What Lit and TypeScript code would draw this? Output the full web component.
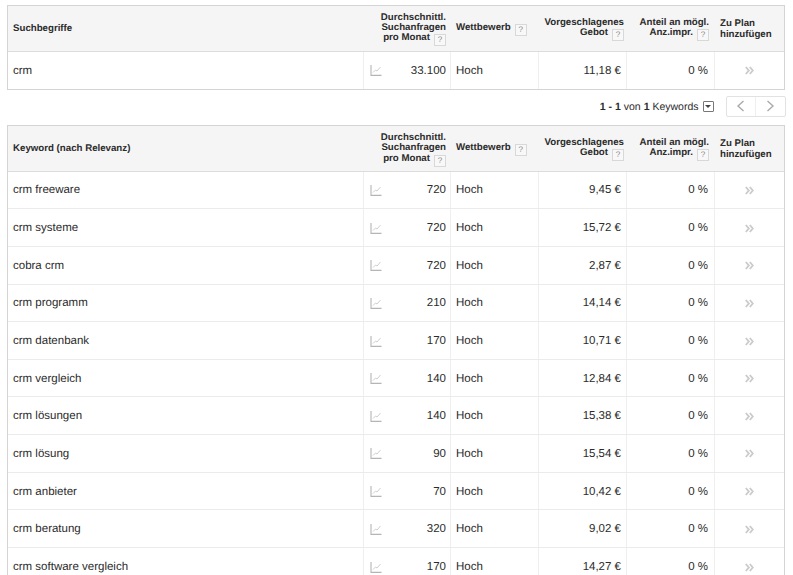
import { LitElement, html, css, svg } from "lit";
import { customElement } from "lit/decorators.js";

const rows: [string, string, string][] = [
  ["crm freeware", "720", "9,45 €"],
  ["crm systeme", "720", "15,72 €"],
  ["cobra crm", "720", "2,87 €"],
  ["crm programm", "210", "14,14 €"],
  ["crm datenbank", "170", "10,71 €"],
  ["crm vergleich", "140", "12,84 €"],
  ["crm lösungen", "140", "15,38 €"],
  ["crm lösung", "90", "15,54 €"],
  ["crm anbieter", "70", "10,42 €"],
  ["crm beratung", "320", "9,02 €"],
  ["crm software vergleich", "170", "14,27 €"],
];

const chart = svg`<svg class="chart" width="12" height="11" viewBox="0 0 12 11" fill="none">
  <path d="M1 0V10.4H11.5" stroke="#b5b5b5" stroke-width="1.1"/>
  <path d="M3 7.5L5.5 5L7 6L10.5 2" stroke="#c8c8c8" stroke-width="0.9"/></svg>`;

const chevrons = svg`<svg width="9" height="9" viewBox="0 0 9 9" fill="none" stroke="#cbcbcb" stroke-width="1.9">
  <path d="M0.8 1L3.8 4.5L0.8 8"/><path d="M4.8 1L7.8 4.5L4.8 8"/></svg>`;

@customElement("app-root")
export class AppRoot extends LitElement {
  static styles = css`
    :host {
      display: block;
      width: 793px;
      height: 575px;
      overflow: hidden;
      background: #fff;
      font-family: "Liberation Sans", Arial, sans-serif;
      color: #2b2b2b;
      padding-top: 4.5px;
      box-sizing: border-box;
      text-rendering: geometricPrecision;
    }
    .table {
      margin-left: 7px;
      width: 778px;
      box-sizing: border-box;
      border: 1px solid #d4d4d4;
      border-bottom-width: 1.5px;
    }
    .grid {
      display: grid;
      grid-template-columns: 355px 87px 88px 88px 88px 1fr;
    }
    .head {
      height: 46px;
      padding-top: 3px;
      background: #f5f5f5;
      border-bottom: 1px solid #dcdcdc;
      box-sizing: border-box;
      font-size: 9.7px;
      font-weight: bold;
      line-height: 10.4px;
      color: #2b2b2b;
      align-items: center;
    }
    .h1 { padding-left: 5px; }
    .hr { text-align: right; padding-right: 4px; }
    .hr.wide { padding-right: 2px; }
    .hr.anteil { padding-right: 5px; }
    .hl { padding-left: 6px; }
    .help {
      display: inline-block;
      width: 10px;
      height: 10px;
      line-height: 10px;
      margin-left: 4px;
      border: 1px solid #d8d8d8;
      background: #f8f8f8;
      color: #888;
      font-size: 8px;
      font-weight: normal;
      text-align: center;
      vertical-align: -2px;
    }
    .row {
      height: 37.65px;
      box-sizing: border-box;
      border-bottom: 1px solid #ebebeb;
      font-size: 11.5px;
      color: #2b2b2b;
    }
    .row:last-child { border-bottom: none; }
    .cell {
      display: flex;
      align-items: center;
      border-left: 1px solid #efefef;
      padding-top: 1px;
    }
    .kw { border-left: none; padding-left: 5px; }
    .vol { justify-content: space-between; padding: 1px 4px 0 6px; }
    .comp { padding-left: 5px; }
    .num { justify-content: flex-end; padding-right: 5px; }
    .num2 { justify-content: flex-end; padding-right: 6px; }
    .add { justify-content: center; }
    .pager {
      height: 34.5px;
      margin: 0 7.5px 0 7px;
      display: flex;
      justify-content: flex-end;
      align-items: center;
      font-size: 10.5px;
      padding-bottom: 2px;
      box-sizing: border-box;
    }
    .count { margin-top: 1px; }
    .drop {
      display: inline-flex;
      align-items: center;
      justify-content: center;
      width: 9px;
      height: 9px;
      margin-left: 4px;
      border: 1px solid #777;
      border-radius: 1px;
    }
    .drop i {
      width: 0;
      height: 0;
      border-left: 3px solid transparent;
      border-right: 3px solid transparent;
      border-top: 3px solid #444;
    }
    .nav {
      display: flex;
      margin-left: 12px;
      border: 1px solid #e2e2e2;
      border-radius: 2px;
      height: 19px;
    }
    .nav span {
      width: 28.5px;
      display: flex;
      align-items: center;
      justify-content: center;
    }
    .nav span + span { border-left: 1px solid #efefef; }
    b { font-weight: bold; }
  `;

  private help() {
    return html`<span class="help">?</span>`;
  }

  private header(title: string) {
    return html`<div class="grid head">
      <div class="h1">${title}</div>
      <div class="hr">Durchschnittl.<br />Suchanfragen<br />pro Monat${this.help()}</div>
      <div class="hl">Wettbewerb${this.help()}</div>
      <div class="hr wide">Vorgeschlagenes<br />Gebot${this.help()}</div>
      <div class="hr anteil">Anteil an mögl.<br />Anz.impr.${this.help()}</div>
      <div class="hl">Zu Plan<br />hinzufügen</div>
    </div>`;
  }

  private row(r: [string, string, string]) {
    return html`<div class="grid row">
      <div class="cell kw">${r[0]}</div>
      <div class="cell vol">${chart}<span>${r[1]}</span></div>
      <div class="cell comp">Hoch</div>
      <div class="cell num">${r[2]}</div>
      <div class="cell num2">0 %</div>
      <div class="cell add">${chevrons}</div>
    </div>`;
  }

  render() {
    return html`
      <div class="table">
        ${this.header("Suchbegriffe")}
        ${this.row(["crm", "33.100", "11,18 €"])}
      </div>
      <div class="pager">
        <span class="count"><b>1 - 1</b> von <b>1</b> Keywords</span>
        <span class="drop"><i></i></span>
        <div class="nav">
          <span><svg width="9" height="12" viewBox="0 0 9 12" fill="none" stroke="#aaa" stroke-width="1.4"><path d="M7.5 1L2 6L7.5 11"/></svg></span>
          <span><svg width="9" height="12" viewBox="0 0 9 12" fill="none" stroke="#aaa" stroke-width="1.4"><path d="M1.5 1L7 6L1.5 11"/></svg></span>
        </div>
      </div>
      <div class="table">
        ${this.header("Keyword (nach Relevanz)")}
        ${rows.map((r) => this.row(r))}
      </div>
    `;
  }
}
